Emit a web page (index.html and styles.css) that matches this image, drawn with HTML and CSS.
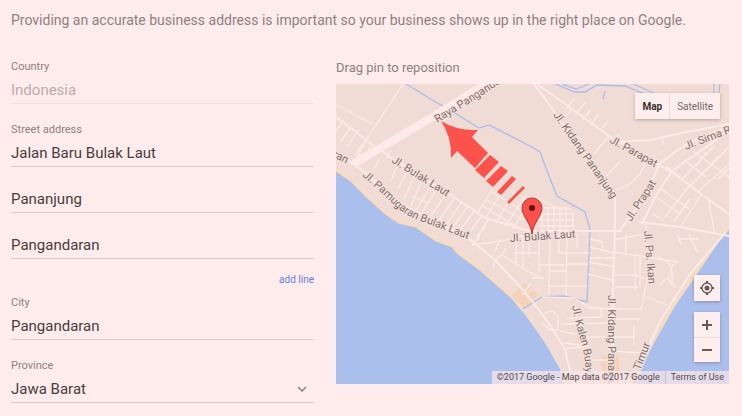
FILE: index.html
```html
<!DOCTYPE html>
<html lang="en">
<head>
  <meta charset="UTF-8">
  <title>Business address</title>
  <link rel="stylesheet" href="styles.css">
</head>
<body>

  <p class="intro">Providing an accurate business address is important so your business shows up in the right place on Google.</p>

  <main class="columns">
    <form class="address">
      <div class="field">
        <label for="country">Country</label>
        <input type="text" id="country" value="Indonesia" disabled>
      </div>
      <div class="field">
        <label for="street1">Street address</label>
        <input type="text" id="street1" value="Jalan Baru Bulak Laut">
      </div>
      <div class="field">
        <input type="text" id="street2" aria-label="Street address line 2" value="Pananjung">
      </div>
      <div class="field">
        <input type="text" id="street3" aria-label="Street address line 3" value="Pangandaran">
      </div>
      <a class="add-line" href="#">add line</a>
      <div class="field">
        <label for="city">City</label>
        <input type="text" id="city" value="Pangandaran">
      </div>
      <div class="field">
        <label for="province">Province</label>
        <div class="select">
          <select id="province">
            <option>Jawa Barat</option>
          </select>
          <svg class="chevron" viewBox="0 0 10 6" width="10" height="6"><path d="M1 1l4 4 4-4"/></svg>
        </div>
      </div>
    </form>

    <section class="location">
      <h2>Drag pin to reposition</h2>
      <div class="map">
        <svg class="map-canvas" viewBox="0 0 393 300" preserveAspectRatio="xMidYMid slice">
          <defs>
            <path id="raya" d="M101 39Q126 24 145 12T180 -12"/>
            <path id="pamugaran" d="M26 92Q44 107 57 120T90 139L134 156"/>
            <path id="kalen" d="M236 222Q240 242 245 258T250 300"/>
          </defs>

          <rect class="land" width="393" height="300"/>

          <!-- sea and beaches -->
          <path class="water" d="M0 87L15 97 33 115 50 130 63 139 80 143 90 150 100 157 117 163 121 169 143 185 177 215 187 228 200 246 209 259 224 285 228 300H0z"/>
          <path class="water" d="M393 146L388 150 363 187 339 222 319 257 306 283 301 300H393z"/>
          <path class="sand" d="M0 86L15 96 33 114 50 129 63 138 80 142 90 149 100 156 117 162 121 168 143 184 177 214 187 226"/>
          <path class="sand" d="M393 144L386 150 361 187 337 222 317 257"/>
          <path class="block" d="M176 211l8-8 15 12-11 10zM183 204l6-5 6 5-5 5zM190 211l7-5 5 5-8 8zM266 272h17v28h-17z"/>

          <!-- rivers -->
          <path class="river" d="M70 0L98 17 117 28 143 44 153 41 196 63 204 68 213 92 221 112 249 128 254 145 251 218 229 212 206 213 187 225"/>
          <path class="river" d="M219 0L239 8 249 8 261 1 289 2 309 10M226 0L240 5 253 0M297 0L320 10 333 13M269 7l-2 8M378 0v15l-3 10M384 0l-2 15"/>

          <!-- main roads -->
          <path class="highway" d="M17 80L58 56 100 31 150 0"/>
          <path class="road wide" d="M201 0L236 25 273 52 321 80 336 88 369 113 393 130M195 -4L213 20 229 43 254 77 279 110 279 147 277 200 276 300"/>
          <path class="road wide" d="M393 42L349 61 323 80 319 90 309 113 283 147M386 52L336 87 319 113 306 140M273 58L315 56 345 49 393 40"/>
          <path class="road wide" d="M0 69L26 86 58 116 95 136 130 152 159 176 187 206 200 222 216 244 229 265 237 300M390 148L354 190 326 234 305 278"/>
          <path class="road wide" d="M0 33L33 58 53 72 110 108 150 134 192 147 239 147 286 147M303 138L344 143 393 152"/>

          <!-- streets north-west -->
          <path class="road" d="M0 21L37 40M67 0L30 56 18 80M0 47l8-11M4 58l11-15M11 63l12-17M19 71l12-16M27 79l8-18M37 86l6-10M50 75l5-9M55 97l7-18M62 105l12-23M68 114l13-27M75 122l13-30M80 126l17-27M85 130l17-27M95 132l16-24M103 136l15-21M110 141l15-22M117 143l15-21M124 146l15-20M132 150l14-18M141 155l11-20M76 112l15 7M149 143l-8 9M142 128l17-27M151 132l18-30M160 139l19-32M169 143l20-31M177 145l17-28M156 108l34 21M151 116l38 21M147 122l35 22"/>
          <!-- dense block around the pin -->
          <path class="road" d="M203 124h29l5 3v20M202 130h34M202 136h36M202 142h37M206 124v23M212 124v23M218 124v23M224 124v23M230 124v23M205 116l17 8"/>
          <!-- streets north-east -->
          <path class="road" d="M213 20l-10-14M230 25l9-11M239 31l10-12M247 36l8-11M255 41l8-11M264 47l8-10M229 33l8-9M273 52l-15 18M281 50l9 11M309 80q-8 20-29 26M270 92l14-14M327 55v6M358 68l35 25M361 82l9-14M371 86l11-14M382 95l11-11M345 96l34-35M353 103l39-39M361 109l32-29M325 105l28 20M320 113l24 17 6-11M329 133l24-31M337 139l17-24M345 142l20-31M330 82l17 14M348 76l22 17M372 113l7 38M316 129l11 8M310 138v11"/>
          <!-- streets south -->
          <path class="road" d="M136 161l30-4 20-5M144 152l-8 9M164 155l-5 13M159 176l7-5 25 16 16 8M159 176l-2 8M166 171l4-7M180 154v28M187 152v34M193 151v22M203 152v37M214 151l-1 60M231 150l-1 62M241 149v15M223 150v19h30M180 169h24M195 199l-9 12M196 194h12M202 181h27M214 187h17M214 202h37M230 180h22M254 163l24 6M254 155l12 3v10M253 178l26 5M252 190l27 7M254 174h24"/>
          <path class="road" d="M278 168l27 4 37 6M278 156l30-6M290 151v22M299 172v35M279 191h19l15 5M279 203h23M304 172v30M313 188l-8 37h-28M322 173q14 6 14 14v15M337 180l-5 15 7 8M324 201l6-7M310 213l21 8M345 160l-4-9M343 155h20M353 150l8 18M252 224l28 1M206 213l32 1 15 9 12 1v9l-34 1M207 231q10-8 15 2v13h-8l-7-6M225 240l52-1M224 247l15 3M229 265l24-3M248 253h50M277 267l28 2M254 276h20M227 259l18 2M280 235h24M298 241v20"/>

          <!-- street names -->
          <g class="street">
            <text><textPath href="#raya">Raya Pangandaran</textPath></text>
            <text><textPath href="#pamugaran">Jl. Pamugaran Bulak Laut</textPath></text>
            <text><textPath href="#kalen">Jl. Kalen Buaya</textPath></text>
            <text transform="translate(-9 70) rotate(27)">aran</text>
            <text transform="translate(55 78) rotate(32)">Jl. Bulak Laut</text>
            <text transform="translate(217 31) rotate(55)">Jl. Kidang Pananjung</text>
            <text transform="translate(273 58) rotate(29)">Jl. Parapat</text>
            <text transform="translate(350 66) rotate(-21)">Jl. Sirna Raya</text>
            <text transform="translate(295 138) rotate(-57)">Jl. Prapat</text>
            <text transform="translate(174 158) rotate(-4)">Jl. Bulak Laut</text>
            <text transform="translate(308 147) rotate(85)">Jl. Ps. Ikan</text>
            <text transform="translate(272 211) rotate(90)">Jl. Kidang Pananjung</text>
            <text transform="translate(299 300) rotate(-69)">Jl. Timur</text>
          </g>

          <!-- direction arrow -->
          <g class="arrow">
            <path d="M105 37Q121 47 142 46L136 53 152 69 139 84 121 67 115 74Q116 53 105 37z"/>
            <path d="M154 71l9 7-15 16-9-8zM165 82l7 5-15 16-7-6zM176 92l4 3-15 16-4-3zM187 102l2 2-16 16-2-2z"/>
          </g>

          <!-- pin -->
          <path class="pin" d="M196 150C195 139 186 132 186 124a10 10 0 0 1 20 0C206 132 197 139 196 150z"/>
          <circle class="pin-dot" cx="196" cy="124" r="3"/>
        </svg>

        <div class="map-type">
          <button type="button" class="active">Map</button>
          <button type="button">Satellite</button>
        </div>

        <div class="map-controls">
          <button type="button" class="locate" aria-label="My location">
            <svg viewBox="0 0 16 16" width="16" height="16">
              <circle class="ring" cx="8" cy="8" r="5"/>
              <circle cx="8" cy="8" r="2.5"/>
              <path d="M7 1h2v2H7zM7 13h2v2H7zM1 7h2v2H1zM13 7h2v2h-2z"/>
            </svg>
          </button>
          <div class="zoom">
            <button type="button" aria-label="Zoom in">
              <svg viewBox="0 0 10 10" width="10" height="10"><path d="M4 0h2v4h4v2H6v4H4V6H0V4h4z"/></svg>
            </button>
            <button type="button" aria-label="Zoom out">
              <svg viewBox="0 0 10 10" width="10" height="10"><path d="M0 4h10v2H0z"/></svg>
            </button>
          </div>
        </div>

        <div class="attribution">
          <span>©2017 Google - Map data ©2017 Google</span>
          <a href="#">Terms of Use</a>
        </div>
      </div>
    </section>
  </main>

</body>
</html>
```
FILE: styles.css
```css
* {
  box-sizing: border-box;
}
body {
  margin: 0;
  padding: 10px 13px 8px 11px;
  background: #feecec;
  color: #4a3c3c;
  font-family: Roboto, sans-serif;
  font-size: 14px;
}
button,
input,
select {
  font-family: inherit;
}
.intro {
  margin: 0;
  color: #8f8080;
  font-size: 14px;
  line-height: 20px;
}
.columns {
  display: grid;
  grid-template-columns: 303fr 393fr;
  gap: 22px;
  margin-top: 29px;
}

/* address form */
.address {
  display: flex;
  flex-direction: column;
}
.field {
  display: flex;
  flex-direction: column;
  margin-bottom: 18px;
}
.field label {
  color: #8f8080;
  font-size: 11px;
  line-height: 16px;
}
.field input,
.field select {
  width: 100%;
  height: 28px;
  padding: 0;
  border: 0;
  border-bottom: 1px solid #dccaca;
  border-radius: 0;
  background: transparent;
  color: #4a3c3c;
  font-size: 15px;
  outline: none;
}
.field label + input,
.field label + .select {
  margin-top: 1px;
}
.field input:disabled {
  border-bottom-color: #f3dfdf;
  color: #bcabab;
}
.field select {
  display: block;
  appearance: none;
}
.select {
  position: relative;
}
.chevron {
  position: absolute;
  top: 11px;
  right: 7px;
  fill: none;
  stroke: #8f8080;
  stroke-width: 1.5;
  pointer-events: none;
}
.add-line {
  align-self: flex-end;
  margin: -5px 0 7px;
  color: #6381e2;
  font-size: 10px;
  line-height: 16px;
  text-decoration: none;
}

/* map */
.location h2 {
  margin: 0 0 8px;
  color: #8f8080;
  font-size: 13px;
  font-weight: 400;
  line-height: 17px;
}
.map {
  position: relative;
  aspect-ratio: 131 / 100;
  overflow: hidden;
}
.map-canvas {
  display: block;
  width: 100%;
  height: 100%;
}
.land {
  fill: #f0dcd5;
}
.water {
  fill: #abbfed;
}
.sand {
  fill: none;
  stroke: #f7dcbf;
  stroke-width: 3;
}
.block {
  fill: #f3d3ba;
}
.river {
  fill: none;
  stroke: #a9bdee;
  stroke-width: 1.3;
}
.road {
  fill: none;
  stroke: #fbebe6;
  stroke-width: 1.3;
}
.road.wide {
  stroke-width: 2;
}
.highway {
  fill: none;
  stroke: #fcebe9;
  stroke-width: 8;
}
.street {
  fill: #806f6c;
  stroke: #f5e3dd;
  stroke-width: 2;
  paint-order: stroke;
  font-size: 11px;
}
.arrow {
  fill: #fb534b;
}
.pin {
  fill: #fa514a;
  stroke: #b33a36;
  stroke-width: 1;
}
.pin-dot {
  fill: #5b1615;
}
.map button {
  display: flex;
  align-items: center;
  justify-content: center;
  padding: 0;
  border: 0;
  background: #feeeee;
  color: #76686a;
  fill: #65585a;
}
.map-type {
  position: absolute;
  top: 9px;
  right: 9px;
  display: flex;
  box-shadow: 0 1px 3px rgba(90, 50, 50, 0.35);
}
.map .map-type button {
  height: 26px;
  padding: 0 7px;
  font-size: 10px;
}
.map .map-type .active {
  border-right: 1px solid #eedcdc;
  color: #3b2f30;
  font-weight: 700;
}
.map-controls {
  position: absolute;
  right: 9px;
  bottom: 22px;
  display: flex;
  flex-direction: column;
  gap: 11px;
}
.map-controls .locate,
.zoom {
  box-shadow: 0 1px 3px rgba(90, 50, 50, 0.35);
}
.map-controls button {
  width: 26px;
  height: 25px;
}
.map-controls .locate {
  height: 26px;
}
.ring {
  fill: none;
  stroke: #65585a;
  stroke-width: 1.3;
}
.zoom button + button {
  border-top: 1px solid #eedcdc;
}
.attribution {
  position: absolute;
  right: 0;
  bottom: 0;
  display: flex;
  background: rgba(247, 230, 232, 0.75);
  color: #57494b;
  font-size: 9px;
  line-height: 13px;
}
.attribution span,
.attribution a {
  padding: 0 5px;
}
.attribution a {
  border-left: 1px solid #cfc4d4;
  color: inherit;
  text-decoration: none;
}
```
